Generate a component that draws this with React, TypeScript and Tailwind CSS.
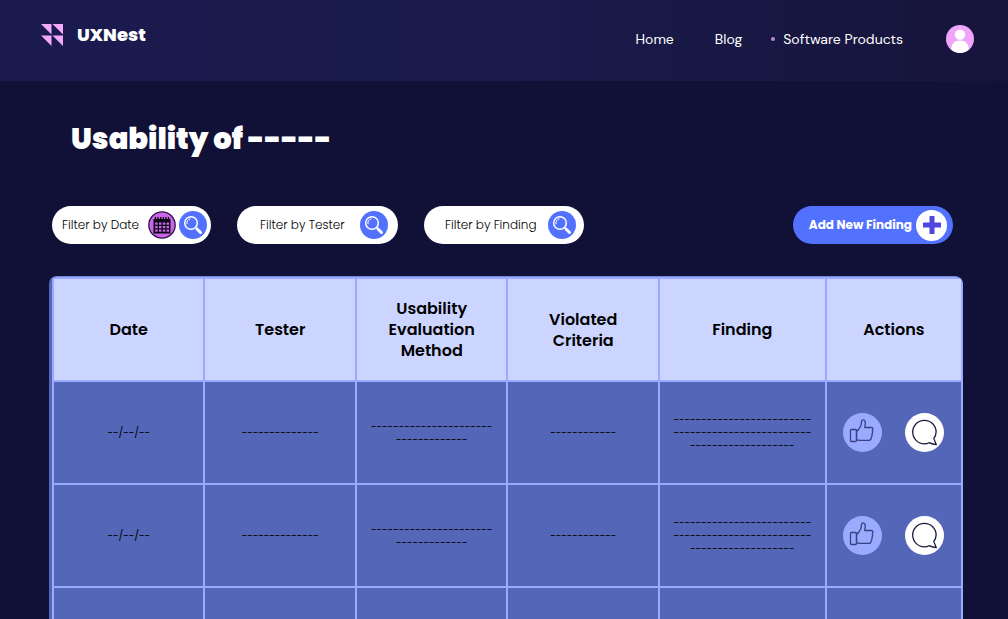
import type { ReactNode } from "react";

type Finding = {
  date: string;
  tester: string;
  method: string[];
  criteria: string;
  finding: string[];
};

const blank: Finding = {
  date: "--/--/--",
  tester: "-".repeat(14),
  method: ["-".repeat(22), "-".repeat(13)],
  criteria: "-".repeat(12),
  finding: ["-".repeat(25), "-".repeat(25), "-".repeat(19)],
};

const findings: Finding[] = [blank, blank, blank];

function Logo() {
  return (
    <svg viewBox="0 0 22 22" className="size-[22px]" fill="#f2a9fb" aria-hidden="true">
      <path d="M0 0h10.5v10.5z" />
      <path d="M11.5 0H22v10.5z" />
      <path d="M0 11.5h10.5V22z" />
      <path d="M11.5 11.5H22V22z" />
    </svg>
  );
}

function Avatar() {
  return (
    <svg viewBox="0 0 28 28" className="size-7" aria-hidden="true">
      <circle cx="14" cy="14" r="14" fill="#efa5fa" />
      <circle cx="14" cy="9.6" r="5.2" fill="#fff" />
      <path d="M5.2 24.6C5.2 19 8.5 15.6 14 15.6S22.8 19 22.8 24.6A14 14 0 0 1 14 28a14 14 0 0 1-8.8-3.4z" fill="#fff" />
    </svg>
  );
}

function SearchIcon() {
  return (
    <svg viewBox="0 0 28 28" className="size-7" fill="none" aria-hidden="true">
      <circle cx="12" cy="12" r="6.3" stroke="#fff" strokeWidth="1.5" />
      <path d="M8 12.8a4.2 4.2 0 0 1 3-4.9" stroke="#fff" strokeWidth="1" strokeLinecap="round" />
      <path d="M16.5 16.5l2 2" stroke="#fff" strokeWidth="1.4" />
      <path d="M18.2 18.2l3.3 3.3" stroke="#fff" strokeWidth="3" strokeLinecap="round" />
    </svg>
  );
}

function CalendarIcon() {
  return (
    <svg viewBox="0 0 28 28" className="size-7" aria-hidden="true">
      <circle cx="14" cy="14" r="13.2" fill="#c966e6" stroke="#30104a" strokeWidth="1.3" />
      <path d="M5.5 8h17v14.5h-17z" fill="#0d0614" />
      <path d="M7.5 6v3M10 6v3M12.7 6v3M15.3 6v3M18 6v3M20.5 6v3" stroke="#0d0614" strokeWidth="1.3" />
      <g fill="#c966e6">
        <path d="M7.2 11.5h2.5v2.2H7.2zM11 11.5h2.5v2.2H11zM14.8 11.5h2.5v2.2h-2.5zM18.5 11.5h2.5v2.2h-2.5z" />
        <path d="M7.2 15h2.5v2.2H7.2zM11 15h2.5v2.2H11zM14.8 15h2.5v2.2h-2.5zM18.5 15h2.5v2.2h-2.5z" />
        <path d="M7.2 18.5h2.5v2.2H7.2zM11 18.5h2.5v2.2H11zM14.8 18.5h2.5v2.2h-2.5zM18.5 18.5h2.5v2.2h-2.5z" />
      </g>
    </svg>
  );
}

function ThumbIcon() {
  return (
    <svg viewBox="0 0 39 39" className="size-[39px]" fill="none" stroke="#38407f" strokeWidth="1.3" strokeLinejoin="round" strokeLinecap="round" aria-hidden="true">
      <rect x="7.5" y="16.5" width="6" height="12" rx="1" />
      <path d="M13.5 17.5h1.5c1-2.2 3-3.8 3.2-6.3.1-1.6 0-4.3 1.8-4.3 2.3 0 2.4 2.6 2.2 4.4-.1 1.2-.4 2-.4 3.2h6.4c1.4 0 1.9 1 1.7 2 0 .8-.6 1.2-.6 1.5.3.6.4 1.4.2 2.2-.2.6-.6.9-.6 1.2.2.6.2 1.5-.1 2.1-.2.5-.6.7-.6 1.1.1 1.5-.7 2.7-2.3 2.7h-8.6c-1.6 0-2.2-.5-3.8-.5z" />
    </svg>
  );
}

function ChatIcon() {
  return (
    <svg viewBox="0 0 39 39" className="size-[39px]" fill="none" stroke="#1c1a3c" strokeWidth="1.3" strokeLinejoin="round" aria-hidden="true">
      <path d="M28.8 25.4c1.5-1.9 2.3-4 2.3-6.4 0-6.6-5.2-11.7-11.7-11.7S7.7 12.5 7.7 19s5.2 11.9 11.7 11.9c1.9 0 3.3-.4 4.7-1.2 1.9.9 4.4 1.8 7.2 2-.9-2.2-1.8-4.2-2.5-6.3z" />
    </svg>
  );
}

function Filter({ label, width, inset, children }: { label: string; width: string; inset: string; children?: ReactNode }) {
  return (
    <form className={`flex h-[38px] items-center gap-[3px] rounded-full bg-white ${width} ${inset}`} onSubmit={(e) => e.preventDefault()}>
      <input
        type="text"
        aria-label={label}
        placeholder={label}
        className="w-0 min-w-0 flex-1 bg-transparent text-xs font-light text-black outline-none placeholder:text-black placeholder:opacity-100"
      />
      {children}
      <button type="submit" aria-label={`Search: ${label}`} className="shrink-0 rounded-full bg-[#5271ff]">
        <SearchIcon />
      </button>
    </form>
  );
}

const cell = "border-2 border-[#99aaff] p-0 text-center align-middle";

export default function App() {
  return (
    <div className="min-h-screen overflow-hidden bg-[#111036] font-['Poppins','Inter',sans-serif] text-white">
      <header className="flex h-[81px] items-center justify-between bg-linear-to-r from-[#1b1a4f] via-[#1a1b4c] to-[#16143b] pr-[34px] pl-[41px]">
        <a href="#" className="mb-3 flex items-center gap-[14px]">
          <Logo />
          <span className="text-lg leading-6 font-extrabold">UXNest</span>
        </a>
        <nav className="mb-1 flex items-center font-['DM_Sans','Inter',sans-serif] text-sm">
          <a href="#home" className="mr-[41px]">Home</a>
          <a href="#blog" className="mr-[29px]">Blog</a>
          <span className="mr-2 size-1 rounded-full bg-[#b78ad0]" />
          <a href="#products" className="mr-[43px]">Software Products</a>
          <button type="button" aria-label="Profile" className="shrink-0">
            <Avatar />
          </button>
        </nav>
      </header>

      <main className="pr-[45px] pl-[49px]">
        <h1 className="pt-[38px] pl-[22px] text-[29px] leading-10 font-black">Usability of -----</h1>

        <div className="mt-[47px] flex items-center justify-between pr-[10px] pl-[3px]">
          <div className="flex items-center gap-[26px]">
            <Filter label="Filter by Date" width="w-[159px]" inset="pr-1 pl-[10px]">
              <button type="button" aria-label="Choose date" className="shrink-0 rounded-full">
                <CalendarIcon />
              </button>
            </Filter>
            <Filter label="Filter by Tester" width="w-[161px]" inset="pr-[10px] pl-[23px]" />
            <Filter label="Filter by Finding" width="w-[160px]" inset="pr-2 pl-[21px]" />
          </div>
          <button type="button" className="flex h-[38px] w-[160px] items-center justify-end gap-1 rounded-full bg-[#5271ff] pr-[6px] text-xs font-bold whitespace-nowrap">
            Add New Finding
            <span className="flex size-[31px] items-center justify-center rounded-full bg-white">
              <svg viewBox="0 0 18 18" className="size-[18px]" fill="#5146e0" aria-hidden="true">
                <path d="M7 0h4q.5 0 .5.5v6h6q.5 0 .5.5v4q0 .5-.5.5h-6v6q0 .5-.5.5H7q-.5 0-.5-.5v-6h-6Q0 11.5 0 11V7q0-.5.5-.5h6v-6Q6.500 0 7 0z" />
              </svg>
            </span>
          </button>
        </div>

        <div className="mt-8 overflow-hidden rounded-t-lg border-t border-[#7385d8] bg-[#5466b7] pl-[3px]">
          <table className="w-full table-fixed border-collapse">
            <colgroup>
              <col className="w-1/6" />
              <col className="w-1/6" />
              <col className="w-1/6" />
              <col className="w-1/6" />
              <col />
              <col className="w-[15%]" />
            </colgroup>
            <thead className="bg-[#ccd5ff] text-base leading-[21px] text-black">
              <tr className="h-[103px]">
                <th scope="col" className={`${cell} font-semibold`}>Date</th>
                <th scope="col" className={`${cell} font-semibold`}>Tester</th>
                <th scope="col" className={`${cell} font-semibold`}>Usability<br />Evaluation<br />Method</th>
                <th scope="col" className={`${cell} font-semibold`}>Violated<br />Criteria</th>
                <th scope="col" className={`${cell} font-semibold`}>Finding</th>
                <th scope="col" className={`${cell} font-semibold`}>Actions</th>
              </tr>
            </thead>
            <tbody className="text-[10px] leading-[13px] whitespace-nowrap text-black">
              {findings.map((f, i) => (
                <tr key={i} className="h-[103px]">
                  <td className={cell}>{f.date}</td>
                  <td className={cell}>{f.tester}</td>
                  <td className={cell}>
                    {f.method.map((line, n) => <span key={n} className="block">{line}</span>)}
                  </td>
                  <td className={cell}>{f.criteria}</td>
                  <td className={cell}>
                    {f.finding.map((line, n) => <span key={n} className="block">{line}</span>)}
                  </td>
                  <td className={cell}>
                    <div className="flex items-center justify-center gap-[23px]">
                      <button type="button" aria-label="Like" className="rounded-full bg-[#99aaff]"><ThumbIcon /></button>
                      <button type="button" aria-label="Comment" className="rounded-full bg-white"><ChatIcon /></button>
                    </div>
                  </td>
                </tr>
              ))}
            </tbody>
          </table>
        </div>
      </main>
    </div>
  );
}
